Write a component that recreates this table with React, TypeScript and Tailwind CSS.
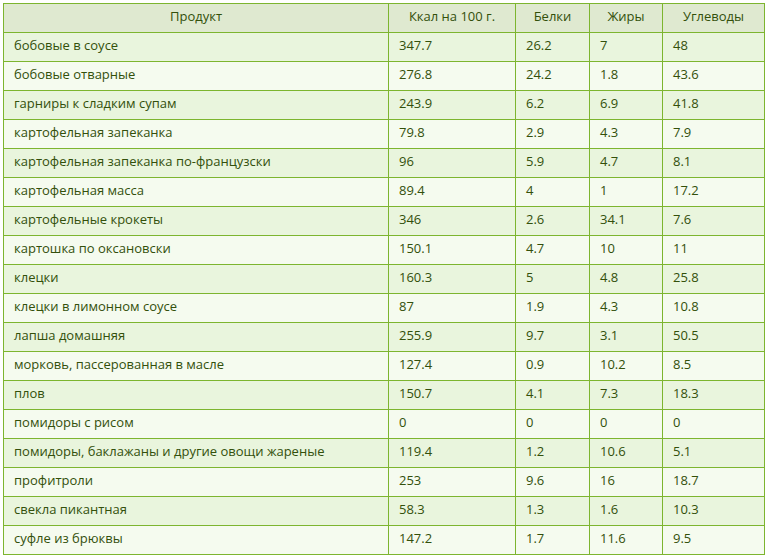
const rows: [string, string, string, string, string][] = [
  ['бобовые в соусе', '347.7', '26.2', '7', '48'],
  ['бобовые отварные', '276.8', '24.2', '1.8', '43.6'],
  ['гарниры к сладким супам', '243.9', '6.2', '6.9', '41.8'],
  ['картофельная запеканка', '79.8', '2.9', '4.3', '7.9'],
  ['картофельная запеканка по-французски', '96', '5.9', '4.7', '8.1'],
  ['картофельная масса', '89.4', '4', '1', '17.2'],
  ['картофельные крокеты', '346', '2.6', '34.1', '7.6'],
  ['картошка по оксановски', '150.1', '4.7', '10', '11'],
  ['клецки', '160.3', '5', '4.8', '25.8'],
  ['клецки в лимонном соусе', '87', '1.9', '4.3', '10.8'],
  ['лапша домашняя', '255.9', '9.7', '3.1', '50.5'],
  ['морковь, пассерованная в масле', '127.4', '0.9', '10.2', '8.5'],
  ['плов', '150.7', '4.1', '7.3', '18.3'],
  ['помидоры с рисом', '0', '0', '0', '0'],
  ['помидоры, баклажаны и другие овощи жареные', '119.4', '1.2', '10.6', '5.1'],
  ['профитроли', '253', '9.6', '16', '18.7'],
  ['свекла пикантная', '58.3', '1.3', '1.6', '10.3'],
  ['суфле из брюквы', '147.2', '1.7', '11.6', '9.5'],
]

const headers = ['Продукт', 'Ккал на 100 г.', 'Белки', 'Жиры', 'Углеводы']

export default function App() {
  return (
    <div className="min-h-[559px] bg-white pt-[3px] pl-[3px] font-['Open_Sans',sans-serif] text-[13px] text-[#33500b]">
      <table className="w-[761px] table-fixed border-collapse">
        <colgroup>
          <col className="w-[385px]" />
          <col className="w-[127px]" />
          <col className="w-[74px]" />
          <col className="w-[73px]" />
          <col className="w-[102px]" />
        </colgroup>
        <thead>
          <tr className="h-[29px] bg-[#dfe9d0]">
            {headers.map((h) => (
              <th key={h} className="border border-[#7db52f] px-[10px] pb-[3px] text-center font-normal">
                {h}
              </th>
            ))}
          </tr>
        </thead>
        <tbody>
          {rows.map((r, i) => (
            <tr key={r[0]} className={i % 2 === 0 ? 'h-[29px] bg-[#e9f5dd]' : 'h-[29px] bg-[#f5fbef]'}>
              {r.map((c, j) => (
                <td key={j} className="border border-[#7db52f] px-[10px] pb-[2px] text-left">
                  {c}
                </td>
              ))}
            </tr>
          ))}
        </tbody>
      </table>
    </div>
  )
}
